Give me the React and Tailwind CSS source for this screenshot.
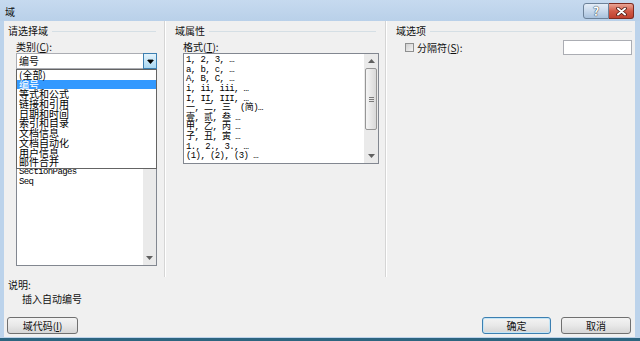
import React from 'react';

const categories = ['(全部)', '编号', '等式和公式', '链接和引用', '日期和时间', '索引和目录', '文档信息', '文档自动化', '用户信息', '邮件合并'];

const fieldNames = ['AutoNum', 'AutoNumLgl', 'AutoNumOut', 'BarCode', 'ListNum', 'Page', 'RevNum', 'Section', 'SectionPages', 'Seq'];

const formats = [
    '1, 2, 3, …',
    'a, b, c, …',
    'A, B, C, …',
    'i, ii, iii, …',
    'I, II, III, …',
    '一, 二, 三  (简)…',
    '壹, 贰, 叁 …',
    '甲, 乙, 丙 …',
    '子, 丑, 寅 …',
    '1., 2., 3., …',
    '(1), (2), (3) …',
];

function GroupHeader({ title, className }) {
    return (
        <div className={'flex items-center h-[12px] ' + className}>
            <span className="leading-[12px] whitespace-nowrap">{title}</span>
            <div className="flex-1 h-px bg-[#d5dfe5] ml-[4px]" />
        </div>
    );
}

function Arrow({ up }) {
    return (
        <svg width="7" height="4" viewBox="0 0 7 4">
            <path d={up ? 'M0 4 L3.5 0 L7 4 Z' : 'M0 0 L7 0 L3.5 4 Z'} fill="#606060" />
        </svg>
    );
}

function Button({ children, focused, className }) {
    return (
        <div
            className={
                'h-[17px] flex items-center justify-center rounded-[3px] border leading-[12px] bg-gradient-to-b from-[#f3f3f3] via-[#e8e8e8] to-[#d6d6d6] ' +
                (focused ? 'border-[#3c7fb1] shadow-[inset_0_0_0_1px_#c4e5f6] ' : 'border-[#707070] ') +
                className
            }
        >
            {children}
        </div>
    );
}

export default function App() {
    return (
        <div className="w-[640px] h-[341px] flex flex-col bg-[#bcd3eb] overflow-hidden font-['Noto_Sans_CJK_SC',sans-serif] text-[10px] text-[#111] select-none">
            {/* title bar */}
            <div className="h-[21px] flex items-start bg-gradient-to-b from-[#c6daef] to-[#b9d0e9]">
                <span className="pl-[5px] pt-[6px] leading-[12px]">域</span>
                <div className="ml-auto mr-[6px] mt-[3px] flex">
                    <div className="w-[26px] h-[16px] rounded-l-[3px] border border-[#6d8299] bg-gradient-to-b from-[#e4edf7] via-[#c8d9ec] to-[#a9c2dd] flex items-center justify-center">
                        <span className="text-white font-bold text-[12px] leading-[12px] [text-shadow:0_0_1px_#203040,0_0_1px_#203040]">?</span>
                    </div>
                    <div className="w-[25px] h-[16px] rounded-r-[3px] border border-l-0 border-[#7e2b20] bg-gradient-to-b from-[#e9a596] via-[#d15a47] to-[#c0402e] flex items-center justify-center">
                        <svg width="11" height="9" viewBox="0 0 11 9">
                            <path d="M2 1.5 L9 7.5 M9 1.5 L2 7.5" stroke="#4a1710" strokeWidth="3.6" strokeLinecap="round" />
                            <path d="M2 1.5 L9 7.5 M9 1.5 L2 7.5" stroke="#fff" strokeWidth="2" strokeLinecap="round" />
                        </svg>
                    </div>
                </div>
            </div>

            <div className="flex pl-[4px] pr-[5px]">
                <div className="w-[631px] h-[316px] bg-[#f0f0f0] flex flex-col">
                    {/* columns */}
                    <div className="h-[256px] flex">
                        {/* left: 请选择域 */}
                        <div className="w-[160px] relative pt-[4px]">
                            <GroupHeader title="请选择域" className="pl-[4px] pr-[8px]" />
                            <div className="mt-[4px] pl-[12px] leading-[12px]">
                                类别(<u>C</u>):
                            </div>
                            <div className="ml-[12px] w-[141px] h-[16px] flex">
                                <div className="flex-1 bg-white border-y border-l border-[#abadb3] pl-[2px] leading-[14px]">编号</div>
                                <div className="w-[14px] border border-[#3c7fb1] bg-gradient-to-b from-[#e3f3fc] to-[#a9d7f1] flex items-center justify-center">
                                    <svg width="7" height="5" viewBox="0 0 7 5">
                                        <path d="M0 1 L7 1 L3.5 5 Z" fill="#000" />
                                        <path d="M1 0 H6" stroke="#000" strokeWidth="0.8" />
                                    </svg>
                                </div>
                            </div>
                            <div className="mt-[2px] pl-[12px] leading-[12px]">
                                域名(<u>F</u>):
                            </div>
                            <div className="mt-[2px] ml-[12px] w-[141px] h-[181px] border border-[#828790] bg-white flex">
                                <div className="flex-1 pt-[1px] pl-[2px] font-['Liberation_Mono',monospace] text-[9px] tracking-[-0.6px] leading-[10px] text-black">
                                    {fieldNames.map((name) => (
                                        <div key={name}>{name}</div>
                                    ))}
                                </div>
                                <div className="w-[13px] bg-[#eaeaea] flex flex-col justify-end items-center pb-[5px]">
                                    <Arrow />
                                </div>
                            </div>

                            {/* open dropdown */}
                            <div className="absolute left-[12px] top-[48px] w-[141px] h-[100px] border border-[#646464] bg-white z-10">
                                {categories.map((c, i) => (
                                    <div
                                        key={c}
                                        className={
                                            'h-[9.7px] leading-[9.7px] pl-[2px] whitespace-nowrap ' +
                                            (i === 1 ? 'bg-[#3399ff] text-white' : 'text-black')
                                        }
                                    >
                                        {c}
                                    </div>
                                ))}
                            </div>
                        </div>

                        <div className="w-px bg-[#d5d5d5]" />
                        <div className="w-px bg-white" />

                        {/* middle: 域属性 */}
                        <div className="w-[219px] pt-[4px]">
                            <GroupHeader title="域属性" className="pl-[9px] pr-[9px]" />
                            <div className="mt-[4px] pl-[17px] leading-[12px]">
                                格式(<u>T</u>):
                            </div>
                            <div className="ml-[17px] w-[196px] h-[111px] border border-[#828790] bg-white flex">
                                <div className="flex-1 pt-[2px] pl-[2px] font-['Liberation_Mono','Noto_Sans_CJK_SC',monospace] text-[9px] tracking-[-0.6px] leading-[9.63px] whitespace-pre text-black">
                                    {formats.map((f) => (
                                        <div key={f}>{f}</div>
                                    ))}
                                </div>
                                <div className="w-[14px] bg-[#eaeaea] flex flex-col items-center">
                                    <div className="h-[14px] flex items-center justify-center">
                                        <Arrow up />
                                    </div>
                                    <div className="w-[12px] h-[62px] border border-[#969696] rounded-[2px] bg-gradient-to-r from-[#f5f5f5] to-[#d9d9d9] flex flex-col items-center justify-center gap-[1px]">
                                        <div className="w-[5px] h-px bg-[#7a7a7a]" />
                                        <div className="w-[5px] h-px bg-[#7a7a7a]" />
                                        <div className="w-[5px] h-px bg-[#7a7a7a]" />
                                    </div>
                                    <div className="flex-1" />
                                    <div className="h-[14px] flex items-center justify-center">
                                        <Arrow />
                                    </div>
                                </div>
                            </div>
                        </div>

                        <div className="w-px bg-[#d5d5d5]" />
                        <div className="w-px bg-white" />

                        {/* right: 域选项 */}
                        <div className="flex-1 pt-[4px]">
                            <GroupHeader title="域选项" className="pl-[9px] pr-[3px]" />
                            <div className="mt-[3px] h-[15px] flex items-center pl-[18px] pr-[3px]">
                                <div className="w-[9px] h-[9px] border border-[#8e8f8f] bg-gradient-to-br from-[#cfcfcf] to-[#f4f4f4]" />
                                <span className="ml-[3px] leading-[12px]">
                                    分隔符(<u>S</u>):
                                </span>
                                <div className="ml-auto w-[69px] h-[15px] border border-[#abadb3] bg-white" />
                            </div>
                        </div>
                    </div>

                    {/* description */}
                    <div className="mt-[2px] pl-[4px] leading-[12px]">说明:</div>
                    <div className="mt-[2px] pl-[18px] leading-[12px]">插入自动编号</div>

                    {/* buttons */}
                    <div className="mt-[12px] flex pl-[3px] pr-[4px]">
                        <Button className="w-[71px]">
                            域代码(<u>I</u>)
                        </Button>
                        <div className="flex-1" />
                        <Button focused className="w-[69px]">确定</Button>
                        <Button className="w-[70px] ml-[10px]">取消</Button>
                    </div>
                </div>
            </div>

            <div className="h-px bg-[#bcd3eb]" />
            <div className="flex-1 bg-[#2d6580]" />
        </div>
    );
}
